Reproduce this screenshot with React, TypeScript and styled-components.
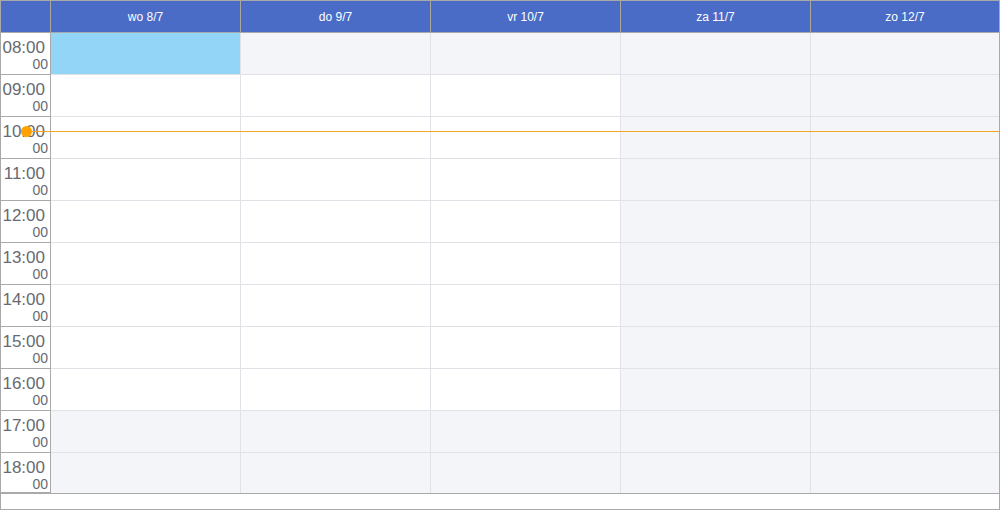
import styled, { createGlobalStyle } from 'styled-components';

const GlobalStyle = createGlobalStyle`
  html, body {
    margin: 0;
    padding: 0;
    background: #fff;
  }
  * {
    box-sizing: border-box;
  }
`;

const days = [
  { label: 'wo 8/7', weekend: false },
  { label: 'do 9/7', weekend: false },
  { label: 'vr 10/7', weekend: false },
  { label: 'za 11/7', weekend: true },
  { label: 'zo 12/7', weekend: true },
];

const hours = [8, 9, 10, 11, 12, 13, 14, 15, 16, 17, 18];

const COLS = '50px 190px 190px 190px 190px 1fr';

// Layout
const Scheduler = styled.div`
  position: relative;
  width: 1000px;
  height: 510px;
  border: 1px solid #a9a9a9;
  display: flex;
  flex-direction: column;
  font-family: 'Liberation Sans', Arial, sans-serif;
  overflow: hidden;
`;

const HeaderRow = styled.div`
  display: grid;
  grid-template-columns: ${COLS};
  height: 32px;
  background: #4a6cc6;
  border-bottom: 1px solid #a9a9a9;
`;

const HeaderCell = styled.div<{ $last?: boolean }>`
  display: flex;
  align-items: center;
  justify-content: center;
  color: #fff;
  font-size: 12px;
  border-right: ${({ $last }) => ($last ? 'none' : '1px solid #aaa79c')};
`;

const Body = styled.div`
  position: relative;
  display: grid;
  grid-template-columns: ${COLS};
  grid-template-rows: repeat(10, 42px) 40px;
  border-bottom: 1px solid #a9a9a9;
`;

const TimeCell = styled.div`
  display: flex;
  flex-direction: column;
  align-items: flex-end;
  padding: 6px 5px 0 0;
  border-right: 1px solid #a9a9a9;
  border-bottom: 1px solid #a9a9a9;
  color: #676a71;
  &:nth-last-child(6) {
    border-bottom: none;
  }
`;

const Hour = styled.span`
  font-size: 17px;
  line-height: 18px;
`;

const Minutes = styled.span`
  font-size: 14px;
  line-height: 15px;
  margin-right: -3px;
`;

const Slot = styled.div<{ $tone: 'work' | 'off' | 'selected'; $last?: boolean; $bottom?: boolean }>`
  background: ${({ $tone }) =>
    $tone === 'selected' ? '#93d5f6' : $tone === 'work' ? '#ffffff' : '#f4f5f9'};
  border-bottom: ${({ $bottom }) => ($bottom ? 'none' : '1px solid #e1e2e8')};
  border-right: ${({ $last }) => ($last ? 'none' : '1px solid #e1e2e8')};
`;

const NowLine = styled.div`
  position: absolute;
  left: 25px;
  right: 0;
  top: 98px;
  height: 1px;
  background: #f2a626;
`;

const NowDot = styled.div`
  position: absolute;
  left: 20px;
  top: 93px;
  width: 11px;
  height: 11px;
  border-radius: 50%;
  background: #ffa200;
`;

const Footer = styled.div`
  flex: 1;
`;

const pad = (n: number) => String(n).padStart(2, '0');

export default function App() {
  return (
    <>
      <GlobalStyle />
      <Scheduler>
        <HeaderRow>
          <HeaderCell />
          {days.map((d, i) => (
            <HeaderCell key={d.label} $last={i === days.length - 1}>
              {d.label}
            </HeaderCell>
          ))}
        </HeaderRow>
        <Body>
          {hours.map((h, i) => (
            <Row key={h} hour={h} last={i === hours.length - 1} />
          ))}
          <NowLine />
          <NowDot />
        </Body>
        <Footer />
      </Scheduler>
    </>
  );
}

function Row({ hour, last }: { hour: number; last: boolean }) {
  return (
    <>
      <TimeCell>
        <Hour>{pad(hour)}:00</Hour>
        <Minutes>00</Minutes>
      </TimeCell>
      {days.map((d, i) => {
        const working = !d.weekend && hour >= 9 && hour < 17;
        const tone = i === 0 && hour === 8 ? 'selected' : working ? 'work' : 'off';
        return (
          <Slot key={d.label} $tone={tone} $last={i === days.length - 1} $bottom={last} />
        );
      })}
    </>
  );
}
